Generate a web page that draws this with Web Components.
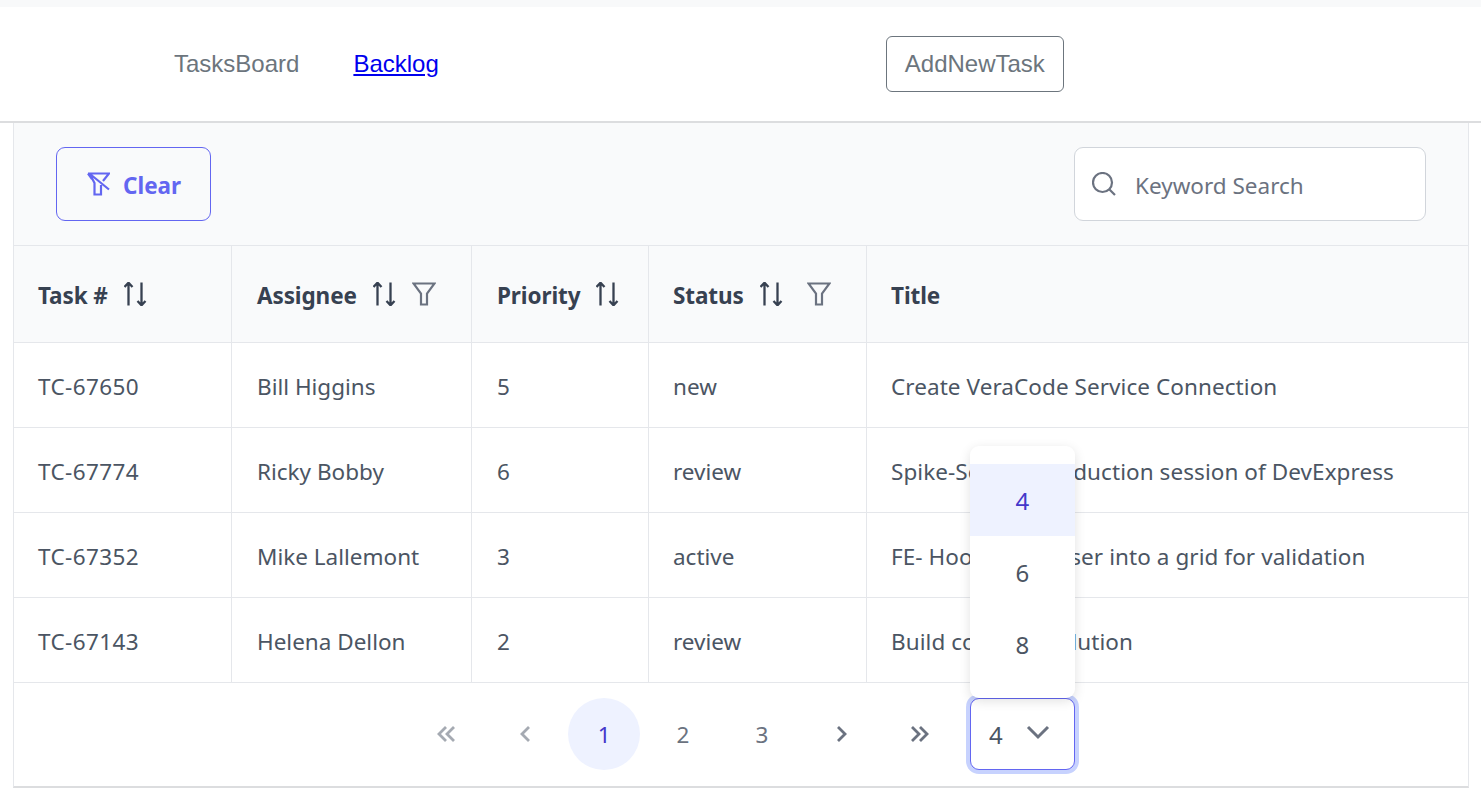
<!DOCTYPE html>
<html lang="en">
<head>
<meta charset="utf-8">
<title>Backlog</title>
<style>
  html, body { margin: 0; background: #fff; }
  body { font-family: "Noto Sans", "Liberation Sans", sans-serif; overflow: hidden; }
</style>
</head>
<body>
<top-nav>
  <span slot="board">TasksBoard</span>
  <a slot="backlog" href="#">Backlog</a>
  <span slot="action">AddNewTask</span>
</top-nav>
<task-grid></task-grid>

<script>
const ICONS = {
  sort: '<path d="M4.500 23.500V1M.5 5l4-4.300L8.500 5M17.500 .5v22.500M13.500 19l4 4.300 4-4.300"/>',
  filter: '<path d="M1.500 1.500h21L15 11.500V22.500H9V11.500z"/>',
  clear: '<path d="M2 1.500h21l-6 7.500M3.500 1.500l5 9.500V22.500h6.500V13M4 2l19 15.500M2 1.500l4 5.500"/>',
  search: '<circle cx="10.500" cy="10.500" r="9.500"/><path d="M17.500 17.500l5.500 5.500"/>',
  first: '<path d="M12 5l-7 7 7 7M20 5l-7 7 7 7"/>',
  prev: '<path d="M16 5l-7 7 7 7"/>',
  next: '<path d="M9 5l7 7-7 7"/>',
  last: '<path d="M4 5l7 7-7 7M12 5l7 7-7 7"/>',
  down: '<path d="M2 5l10 10L22 5"/>'
};

class UiIcon extends HTMLElement {
  constructor() {
    super();
    this.attachShadow({ mode: 'open' });
  }

  connectedCallback() {
    const name = this.getAttribute('name');
    const size = this.getAttribute('size') || 24;
    const weight = this.getAttribute('weight') || 2;
    this.shadowRoot.innerHTML = `
      <style>
        :host { display: inline-flex; flex: none; }
        svg { display: block; fill: none; stroke: currentColor; }
      </style>
      <svg width="${size}" height="${size}" viewBox="0 0 24 24" stroke-width="${weight}">${ICONS[name]}</svg>
    `;
  }
}
customElements.define('ui-icon', UiIcon);

class TopNav extends HTMLElement {
  constructor() {
    super();
    this.attachShadow({ mode: 'open' });
    this.shadowRoot.innerHTML = `
      <style>
        :host {
          display: flex;
          align-items: center;
          box-sizing: border-box;
          height: 116px;
          margin-top: 7px;
          padding-left: 174px;
          border-bottom: 2px solid #dcdddf;
          box-shadow: 0 -7px 0 #f8f9fa;
          background: #fff;
          font: 24px "Liberation Sans", Arial, sans-serif;
          color: #6c757d;
        }
        .backlog { margin-left: 54px; }
        ::slotted(a) { color: #0000ee; }
        .action {
          display: flex;
          align-items: center;
          box-sizing: border-box;
          height: 56px;
          margin-left: 447px;
          padding: 0 18px;
          border: 1px solid #6c757d;
          border-radius: 6px;
        }
      </style>
      <slot name="board"></slot>
      <span class="backlog"><slot name="backlog"></slot></span>
      <span class="action"><slot name="action"></slot></span>
    `;
  }
}
customElements.define('top-nav', TopNav);

class GridToolbar extends HTMLElement {
  constructor() {
    super();
    this.attachShadow({ mode: 'open' });
    this.shadowRoot.innerHTML = `
      <style>
        :host {
          display: flex;
          justify-content: space-between;
          align-items: center;
          box-sizing: border-box;
          height: 123px;
          padding: 0 42px;
          background: #f9fafb;
          border-bottom: 1px solid #e5e7eb;
          font-size: 22.500px;
        }
        span { padding-top: 2px; }
        .clear {
          display: flex;
          align-items: center;
          gap: 13px;
          box-sizing: border-box;
          width: 155px;
          height: 74px;
          padding-left: 29px;
          border: 1px solid #6366f1;
          border-radius: 9px;
          color: #6366f1;
          font-weight: 700;
        }
        .search {
          display: flex;
          align-items: center;
          gap: 19px;
          box-sizing: border-box;
          width: 352px;
          height: 74px;
          padding-left: 17px;
          background: #fff;
          border: 1px solid #d1d5db;
          border-radius: 9px;
          color: #6b7280;
        }
      </style>
      <div class="clear"><ui-icon name="clear" weight="2.200"></ui-icon><span>Clear</span></div>
      <div class="search"><ui-icon name="search" weight="2.200"></ui-icon><span>Keyword Search</span></div>
    `;
  }
}
customElements.define('grid-toolbar', GridToolbar);

class PageSizeSelect extends HTMLElement {
  constructor() {
    super();
    this.attachShadow({ mode: 'open' });
    this.shadowRoot.innerHTML = `
      <style>
        :host {
          position: relative;
          display: block;
          margin-left: 11px;
          font-size: 24px;
          color: #4b5563;
        }
        .value {
          display: flex;
          align-items: center;
          justify-content: space-between;
          box-sizing: border-box;
          width: 105px;
          height: 72px;
          padding: 0 24px 0 18px;
          background: #fff;
          border: 1px solid #6366f1;
          border-radius: 9px;
          box-shadow: 0 0 0 4px #c7d2fe;
        }
        .value ui-icon { color: #6b7280; }
        .menu {
          position: absolute;
          left: 0;
          bottom: 100%;
          width: 105px;
          box-sizing: border-box;
          padding: 18px 0;
          background: #fff;
          border-radius: 9px;
          box-shadow: 0 3px 12px rgba(0, 0, 0, .12);
        }
        .item {
          display: flex;
          align-items: center;
          justify-content: center;
          height: 72px;
        }
        .item.on { background: #eef2ff; color: #4338ca; }
      </style>
      <div class="menu">
        <div class="item on">4</div>
        <div class="item">6</div>
        <div class="item">8</div>
      </div>
      <div class="value"><span>4</span><ui-icon name="down" weight="3"></ui-icon></div>
    `;
  }
}
customElements.define('page-size-select', PageSizeSelect);

class GridPager extends HTMLElement {
  constructor() {
    super();
    this.attachShadow({ mode: 'open' });
    this.shadowRoot.innerHTML = `
      <style>
        :host {
          display: flex;
          justify-content: center;
          box-sizing: border-box;
          height: 103px;
          padding-top: 15px;
          font-size: 22.500px;
          color: #6b7280;
          background: #fff;
        }
        .btn {
          display: flex;
          align-items: center;
          justify-content: center;
          width: 72px;
          height: 72px;
          margin: 0 3.430px;
          border-radius: 50%;
        }
        .off { opacity: .6; }
        .on { background: #eef2ff; color: #4338ca; }
      </style>
      <div class="btn off"><ui-icon name="first" weight="2.800"></ui-icon></div>
      <div class="btn off"><ui-icon name="prev" weight="2.800"></ui-icon></div>
      <div class="btn on">1</div>
      <div class="btn">2</div>
      <div class="btn">3</div>
      <div class="btn"><ui-icon name="next" weight="2.800"></ui-icon></div>
      <div class="btn"><ui-icon name="last" weight="2.800"></ui-icon></div>
      <page-size-select></page-size-select>
    `;
  }
}
customElements.define('grid-pager', GridPager);

const COLUMNS = [
  { label: 'Task #', width: 217, sort: true },
  { label: 'Assignee', width: 240, sort: true, filter: true },
  { label: 'Priority', width: 177, sort: true },
  { label: 'Status', width: 218, sort: true, filter: true },
  { label: 'Title', width: 602 }
];

const TASKS = [
  ['TC-67650', 'Bill Higgins', '5', 'new', 'Create VeraCode Service Connection'],
  ['TC-67774', 'Ricky Bobby', '6', 'review', 'Spike-Setup introduction session of DevExpress'],
  ['TC-67352', 'Mike Lallemont', '3', 'active', 'FE- Hook in browser into a grid for validation'],
  ['TC-67143', 'Helena Dellon', '2', 'review', 'Build complex solution']
];

class TaskGrid extends HTMLElement {
  constructor() {
    super();
    this.attachShadow({ mode: 'open' });
  }

  connectedCallback() {
    const head = COLUMNS.map(col => `
      <th>
        <div class="head">
          <span>${col.label}</span>
          ${col.sort ? '<ui-icon class="sort" name="sort" weight="2.300"></ui-icon>' : ''}
          ${col.filter ? '<ui-icon class="filter" name="filter" weight="2.200"></ui-icon>' : ''}
        </div>
      </th>`).join('');
    const rows = TASKS.map(task => `<tr>${task.map(text => `<td>${text}</td>`).join('')}</tr>`).join('');

    this.shadowRoot.innerHTML = `
      <style>
        :host {
          display: block;
          margin: 0 12px 0 13px;
          border: 1px solid #e5e7eb;
          border-width: 0 1px 2px;
          border-bottom-color: #dcdddf;
          color: #4b5563;
          font-size: 22.500px;
        }
        table {
          width: 1454px;
          table-layout: fixed;
          border-collapse: separate;
          border-spacing: 0;
        }
        th, td {
          box-sizing: border-box;
          padding: 2px 24px 0;
          text-align: left;
          border-bottom: 1px solid #e5e7eb;
          border-left: 1px solid #e5e7eb;
          white-space: nowrap;
        }
        th:first-child, td:first-child { border-left: 0; }
        th:nth-child(2), td:nth-child(2), th:nth-child(3), td:nth-child(3) { padding-left: 25px; }
        td:first-child { letter-spacing: .4px; }
        td:last-child { letter-spacing: .07px; }
        th {
          height: 97px;
          background: #f9fafb;
          color: #374151;
          font-weight: 700;
          letter-spacing: -.1px;
        }
        td { height: 85px; }
        .head { display: flex; align-items: center; }
        .sort { color: #374151; margin: -3px 0 0 16px; }
        .filter { color: #6b7280; margin: -3px 0 0 15px; }
        th:nth-child(4) .filter { margin-left: 23px; }
      </style>
      <grid-toolbar></grid-toolbar>
      <table>
        <colgroup>${COLUMNS.map(col => `<col style="width:${col.width}px">`).join('')}</colgroup>
        <thead><tr>${head}</tr></thead>
        <tbody>${rows}</tbody>
      </table>
      <grid-pager></grid-pager>
    `;
  }
}
customElements.define('task-grid', TaskGrid);
</script>
</body>
</html>
